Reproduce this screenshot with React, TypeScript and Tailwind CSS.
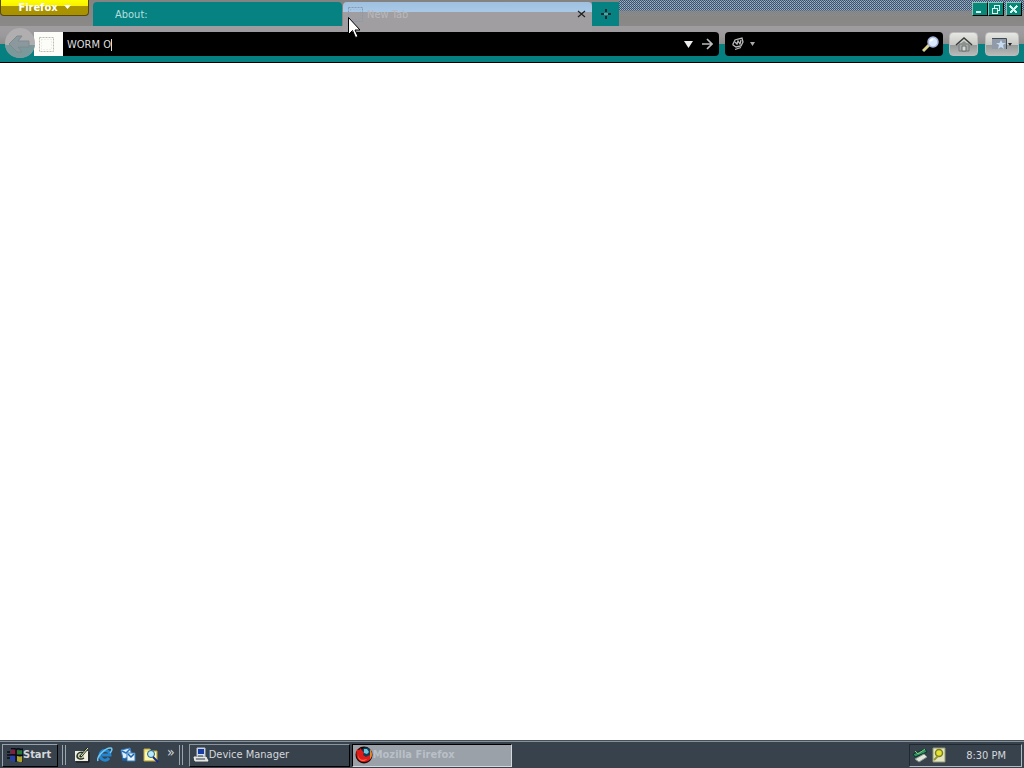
import type { ReactNode } from "react";

const ui = "font-['DejaVu_Sans_Condensed','DejaVu_Sans',sans-serif]";

function WindowButton({ label, children }: { label: string; children: ReactNode }) {
  return (
    <button aria-label={label} className="flex h-[14px] w-4 items-center justify-center border border-t-[#8fc4bc] border-l-[#8fc4bc] border-r-black border-b-black bg-[#078777] text-[#d5f4ec]">
      <svg width="12" height="11" viewBox="0 0 12 11" fill="none" stroke="currentColor" shapeRendering="crispEdges">{children}</svg>
    </button>
  );
}

function BlankPage({ stroke }: { stroke: string }) {
  return (
    <svg width="15" height="15" viewBox="0 0 15 15" className="shrink-0" fill="none">
      <rect x=".5" y=".5" width="14" height="14" stroke={stroke} strokeDasharray="2 1" />
      <rect x="2.5" y="2.5" width="10" height="10" stroke={stroke} strokeDasharray="1 2" opacity=".4" />
    </svg>
  );
}

function FirefoxIcon() {
  return (
    <svg width="18" height="18" viewBox="0 0 18 18" className="shrink-0">
      <circle cx="9" cy="9" r="8.5" fill="#160806" />
      <circle cx="11" cy="6.5" r="5" fill="#123c55" />
      <path d="M9 3l3 0 2 3-2 2-3-1z" fill="#6fc5d9" />
      <path d="M2 3l2 1 2-2 1 3 2 1-1 3 3 2 4-2 2-3c1 6-3 10-8 10-6 0-9-6-7-13z" fill="#e01c18" />
      <path d="M3 8c0 5 4 7 9 5-3 4-10 2-9-5" fill="#ff6a4c" />
      <path d="M15 3c3 4 2 8 0 10l0-5z" fill="#e08a2f" />
    </svg>
  );
}

function QuickIcons() {
  return (
    <>
      <button aria-label="Show Desktop"><svg width="16" height="16" viewBox="0 0 16 16"><path d="M1 4h13v10H1z" fill="#f1eee0" /><path d="M2 15h13V5" stroke="#111" fill="none" /><path d="M10 6c-3-2-7 0-7 3s4 4 7 2" stroke="#273426" strokeWidth="1.5" fill="#c7d0b2" /><path d="M6 10l8-9" stroke="#172820" strokeWidth="2.5" /><path d="M7 9l7-8" stroke="#fff5be" /></svg></button>
      <button aria-label="Internet Explorer"><svg width="16" height="16" viewBox="0 0 16 16" fill="none"><path d="M12 11c-3 4-9 2-9-3 0-6 10-6 10 0H5" stroke="#2386cf" strokeWidth="3" /><path d="M1 14C-1 10 9 0 14 1c2 1 0 4-1 5" stroke="#71c8f5" strokeWidth="1.5" /></svg></button>
      <button aria-label="Outlook Express"><svg width="16" height="16" viewBox="0 0 16 16"><path d="M1 3l9-2 2 8-9 3z" fill="#dceeff" stroke="#327bc2" /><path d="M2 4l4 2 4-4" fill="none" stroke="#2973bd" strokeWidth="1.5" /><path d="M7 6h8v8H7z" fill="#e4f1ff" stroke="#397eb9" /><path d="M8 7l3 3 3-3M3 11v2h3" fill="none" stroke="#1762a8" strokeWidth="1.5" /></svg></button>
      <button aria-label="Search Files"><svg width="16" height="16" viewBox="0 0 16 16"><path d="M1 2h6l1 2h6v10H1z" fill="#f6e982" stroke="#b7a750" /><path d="M2 5h11v8H2z" fill="#fff8b1" /><circle cx="8" cy="7" r="3.5" fill="#b8eaff" stroke="#246185" /><path d="M10 10l5 5" stroke="#152888" strokeWidth="2" /></svg></button>
    </>
  );
}

function Grip() {
  return <span className="h-5 w-1 shrink-0 border-x border-[#9aa4ad]" />;
}

export default function App() {
  return (
    <div className={`flex min-h-screen flex-col bg-white text-[11px] leading-4 ${ui}`}>
      <header className="border-b border-black bg-[linear-gradient(#858382_0px,#8b8987_26px,#9f9da0_26px,#9b999b_36px,#8d8d8d_44px,#067f80_44px)]">
        <div className="flex h-8 items-start">
          <button className="flex h-4 w-[89px] shrink-0 items-start justify-center gap-1.5 overflow-hidden rounded-b border border-t-0 border-[#59480a] bg-[linear-gradient(#ffff00_0px,#f8f000_6px,#aa9600_6px,#a99100_16px)] font-bold text-white">
            <span className="leading-4">Firefox</span>
            <svg className="mt-1" width="7" height="8" viewBox="0 0 7 8"><path d="M0 1h7L3.500 5z" fill="white" /></svg>
          </button>
          <nav className="flex min-w-0 flex-1 items-start pt-0.5 pl-1">
            <button className="h-6 w-[249px] rounded-t-sm bg-[#078283] pt-0.5 pl-[22px] text-left text-[#b5dfdd]">About:</button>
            <div className="relative ml-px flex h-[30px] w-[249px] items-start rounded-t-sm bg-[linear-gradient(#9fc0df_0px,#a9c9e8_10px,#a09ea1_10px)] pt-[5px] pr-1.5 pl-[5px]">
              <BlankPage stroke="#8499ac" />
              <button className="ml-1 flex-1 text-left text-[#b9b8ba]">New Tab</button>
              <button aria-label="Close tab" className="mt-[3px]"><svg width="9" height="8" viewBox="0 0 9 8"><path d="M1 1l7 6M8 1L1 7" stroke="#222" strokeWidth="1.2" /></svg></button>
              <svg className="absolute top-[15px] left-[5px] z-10" width="12" height="22" viewBox="0 0 12 22"><path d="M.5.5v17l4-4 3 7 2.500-1-3-6.500h5z" fill="white" stroke="black" /></svg>
            </div>
            <button aria-label="New tab" className="flex h-6 w-[27px] items-center justify-center bg-[#078283]">
              <svg width="12" height="10" viewBox="0 0 12 10"><path d="M6 0v3M6 7v3M1 5h10" stroke="#112b33" strokeWidth="2" /><path d="M4 4h4v2H4z" fill="#719797" /></svg>
            </button>
          </nav>
          <div className="flex h-4 w-[405px] items-start justify-end bg-[linear-gradient(transparent_10px,#8b8987cc_11px,#8b8987_16px),conic-gradient(#38536f_25%,#a3b2c4_25%_50%,#38536f_50%_75%,#8297ad_75%)] bg-size-[100%_100%,2px_2px] pt-0.5 pr-0.5">
            <WindowButton label="Minimize"><path d="M2 8h5" strokeWidth="2" /></WindowButton>
            <WindowButton label="Restore"><path d="M4.500 4V1.500h5v5H8M2.500 4.500h5v5h-5z" /></WindowButton>
            <span className="w-0.5" />
            <WindowButton label="Close"><path d="M2 2l7 7M9 2L2 9" strokeWidth="2" /></WindowButton>
          </div>
        </div>
        <div className="flex h-[30px] items-start pr-[5px] pl-1">
          <button aria-label="Back" className="z-10 -mr-0.5 -mt-1 shrink-0">
            <svg width="32" height="30" viewBox="0 0 32 30"><circle cx="16" cy="15" r="15" fill="#b0aeaf" /><path d="M1 17h30c-1 8-7 13-15 13S2 25 1 17" fill="#7b999b" /><path d="M25 13H14l4-5h-5l-8 8 8 8h5l-4-5h11z" fill="#8b999e" stroke="#7e8a8e" /></svg>
          </button>
          <div className="flex h-6 min-w-0 flex-1 items-center overflow-hidden rounded-r bg-black pr-1.5">
            <span className="-ml-1 flex h-full w-[33px] shrink-0 items-center justify-center bg-[#fcfcf8]"><BlankPage stroke="#bcbcac" /></span>
            <div className="flex min-w-0 flex-1 items-center pt-0.5 pl-1">
              <input aria-label="Address" defaultValue="WORM O" className="field-sizing-content max-w-full bg-transparent text-[#dedede] outline-none" />
              <span className="h-3 w-px bg-[#dedede]" />
            </div>
            <button aria-label="Show history"><svg width="9" height="8" viewBox="0 0 9 8"><path d="M0 1h9L4.500 8z" fill="#eee" /></svg></button>
            <button aria-label="Go" className="ml-2"><svg width="12" height="12" viewBox="0 0 12 12" fill="none" stroke="#bbb" strokeWidth="1.7"><path d="M1 6h9M6 1l5 5-5 5" /></svg></button>
          </div>
          <div className="ml-1.5 flex h-6 w-[218px] shrink-0 items-center rounded bg-black pr-1 pl-1.5">
            <button aria-label="Search engine" className="flex items-center gap-1">
              <svg width="15" height="14" viewBox="0 0 15 14" fill="none" stroke="#bbb"><path d="M2 7l2-4 3-1 4-1 1 4-2 4-5 1-3-2zM4 5l2 2 1-3 2 3 1-4M4 12.500l6-2" strokeWidth="1.3" /></svg>
              <svg width="5" height="4" viewBox="0 0 5 4"><path d="M0 0h5L2.500 4z" fill="#aaa" /></svg>
            </button>
            <input aria-label="Search" className="min-w-0 flex-1 bg-transparent text-white outline-none" />
            <button aria-label="Search"><svg width="17" height="17" viewBox="0 0 17 17"><path d="M7 9l-6 6" stroke="#d9d38e" strokeWidth="3" /><circle cx="11" cy="6" r="5" fill="#dceaff" stroke="#a9b5dc" strokeWidth="1.5" /><path d="M8 5l3-2" stroke="white" strokeWidth="2" /></svg></button>
          </div>
          <button aria-label="Home" className="ml-1.5 flex h-6 w-[29px] shrink-0 items-center justify-center rounded-sm border border-[#bbb] bg-[linear-gradient(#e7e7e3_0px,#c7c7c3_12px,#959997_12px,#b9bdbb_23px)]">
            <svg width="18" height="16" viewBox="0 0 18 16"><path d="M4 8h10v7H4z" fill="#a4aaa7" stroke="#757b78" /><path d="M1 9l8-7 8 7" fill="none" stroke="#353b38" strokeWidth="1.5" /><path d="M4 9l5-4 5 4" fill="#8c918e" /><path d="M7 10h4v5H7z" fill="#d5d8d5" stroke="#68716d" /></svg>
          </button>
          <button aria-label="Bookmarks" className="ml-[7px] flex h-6 w-[34px] shrink-0 items-center justify-center rounded-sm border border-[#bbb] bg-[linear-gradient(#e7e7e3_0px,#c7c7c3_12px,#959997_12px,#b9bdbb_23px)]">
            <svg width="22" height="16" viewBox="0 0 22 16"><path d="M1 2h14v11H1z" fill="#909aa8" /><path d="M1 2.500h14.500V13" fill="none" stroke="#404a52" /><path d="M10 4l1.500 3H15l-3 2 1 4-3-2-3 2 1-4-3-2h3.500z" fill="#c7dcf1" /><path d="M17 7h4l-2 3z" fill="#222" /></svg>
          </button>
        </div>
      </header>

      <main className="flex-1 bg-white" />

      <footer className="flex h-7 items-center border-t border-[#465059] bg-[#38424d] pt-px pr-0.5 pl-0.5 text-[#d4d8dc] shadow-[inset_0_1px_0_#87919a]">
        <button className="flex h-[23px] w-14 items-center border border-t-[#97a2ac] border-l-[#97a2ac] border-r-black border-b-black pl-1 font-bold">
          <svg width="16" height="15" viewBox="0 0 16 15"><path d="M4 2c3-2 4 1 6 0v5C7 9 6 6 4 7z" fill="#82213d" /><path d="M10 2c3 1 3 1 6 0v5c-3 1-3 1-6 0z" fill="#247831" /><path d="M3 8c3-2 4 1 6 0v5c-3 2-4-1-6 0z" fill="#2940a4" /><path d="M10 8c3 1 3 1 6 0v5c-3 2-3 1-6 0z" fill="#b2a629" /><path d="M4 1c3-2 4 1 6 0s3 1 6 0v13M9 2v12M3 7c4-1 7 1 13 0M0 4h3M0 7h3M0 10h3" fill="none" stroke="#080b15" strokeWidth="1.5" /></svg>
          Start
        </button>
        <span className="ml-1 flex"><Grip /></span>
        <div className="ml-2 flex items-center gap-[7px]"><QuickIcons /></div>
        <button aria-label="More shortcuts" className="-mt-1.5 ml-2 text-[14px]">»</button>
        <span className="ml-1 flex"><Grip /></span>
        <button className="ml-1.5 flex h-[23px] w-[161px] items-center border border-t-[#8b969f] border-l-[#8b969f] border-r-black border-b-black pl-[3px]">
          <svg width="16" height="16" viewBox="0 0 16 16"><path d="M4 1h8v8H4z" fill="#d9e4f1" stroke="#bbc6d1" /><path d="M5 2h6v5H5z" fill="#173ca4" /><path d="M1 10h12l2 4H2z" fill="#d8d9d3" stroke="#f2f4ea" /><path d="M3 12h9M5 9h5" stroke="#354361" /></svg>
          Device Manager
        </button>
        <button className="ml-0.5 flex h-[23px] w-[160px] items-center border border-t-black border-l-black border-r-[#d3d8dd] border-b-[#d3d8dd] bg-[#9ba1a9] pl-0.5 font-bold text-[#b9c0c7]"><FirefoxIcon />Mozilla Firefox</button>
        <div className="ml-auto flex h-[23px] w-[113px] items-center border border-t-[#202932] border-l-[#202932] border-r-[#b0b8c0] border-b-[#b0b8c0] pr-[15px] pl-0.5">
          <svg width="16" height="16" viewBox="0 0 16 16"><path d="M1 7l12-5 2 3-12 5z" fill="#319064" stroke="#073824" /><path d="M3 12l9-5 3 3-8 5z" fill="#e1e8db" stroke="#87928b" /><path d="M3 4l3 3 7-5" stroke="#85ca7b" fill="none" /></svg>
          <svg className="ml-1" width="14" height="16" viewBox="0 0 14 16"><path d="M1 1h12v14H1z" fill="#e3e5c2" stroke="#909770" /><circle cx="7" cy="6" r="3.500" fill="#e5e235" stroke="#7c801c" strokeWidth="1.500" /><path d="M6 9l-4 4" stroke="#95952d" strokeWidth="2" /></svg>
          <time className="ml-auto pt-0.5 whitespace-nowrap">8:30 PM</time>
        </div>
      </footer>
    </div>
  );
}
